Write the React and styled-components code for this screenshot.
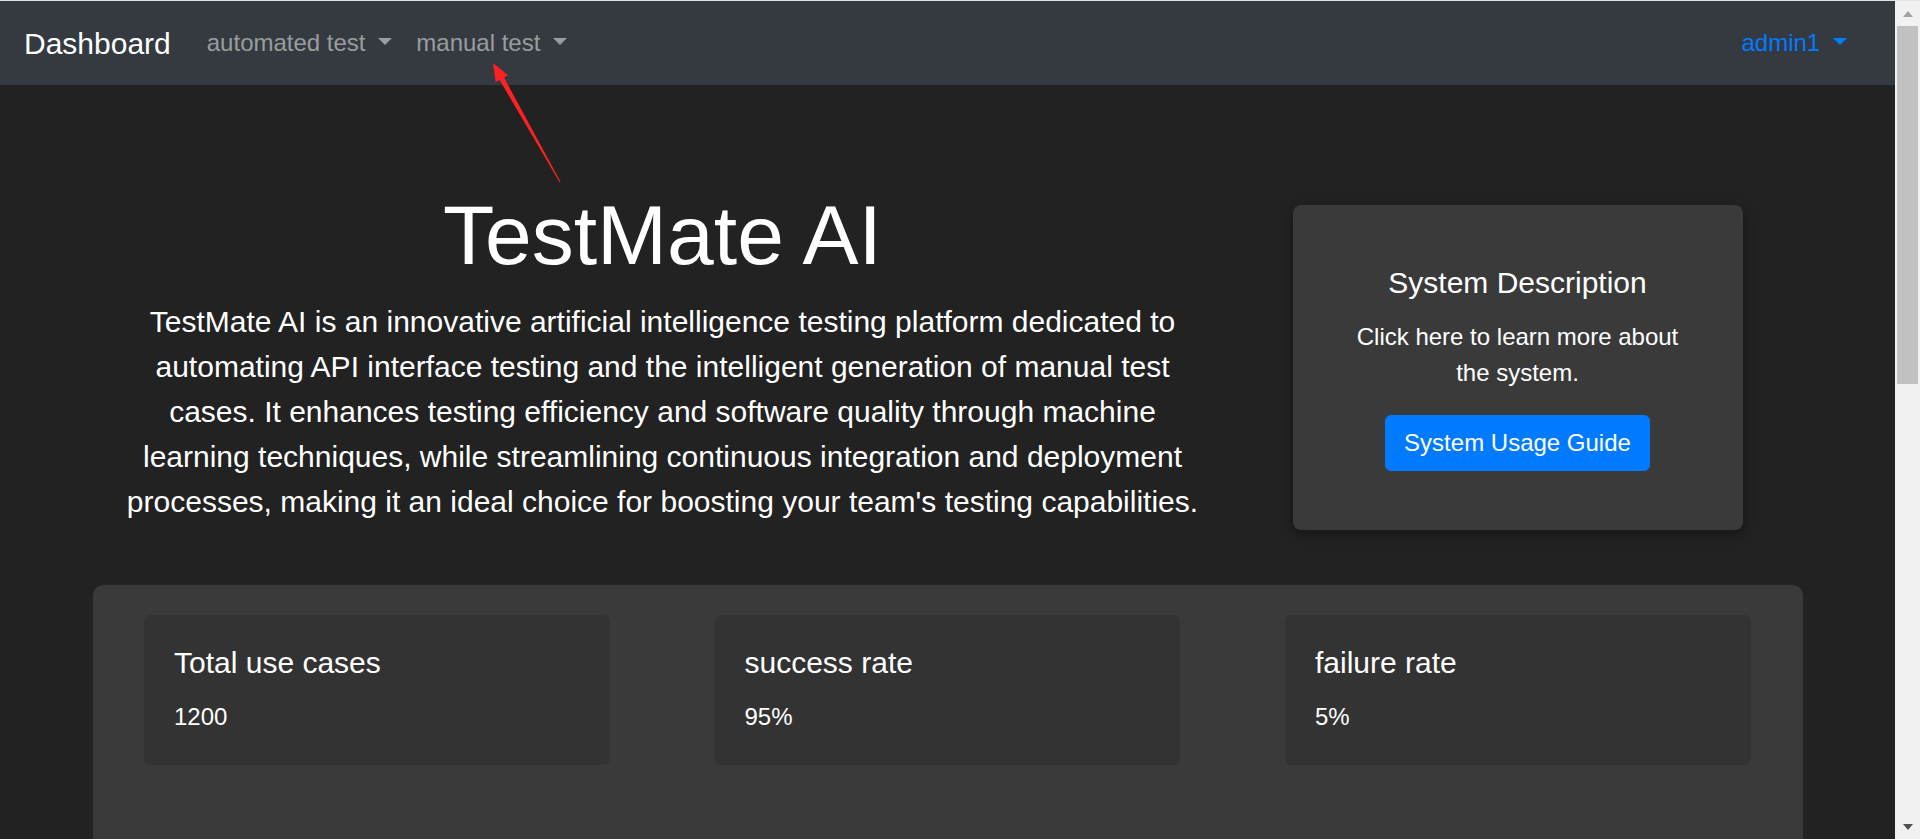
import { styled, createGlobalStyle } from "styled-components";

const GlobalStyle = createGlobalStyle`
  html, body {
    margin: 0;
    padding: 0;
    background: #222;
    overflow: hidden;
  }
  body {
    font-family: "Liberation Sans", Arial, sans-serif;
    color: #fff;
  }
`;

const Frame = styled.div`
  position: relative;
  display: flex;
  height: 100vh;
  box-sizing: border-box;
  border-top: 1px solid #e3e3e3;
  overflow: hidden;
`;

const Main = styled.div`
  flex: 1;
  min-width: 0;
  display: flex;
  flex-direction: column;
  background: #222;
`;

const Navbar = styled.nav`
  display: flex;
  align-items: center;
  height: 84px;
  flex-shrink: 0;
  padding: 0 36px 0 24px;
  background: #343a40;
`;

const Brand = styled.a`
  font-size: 30px;
  line-height: 45px;
  color: #fff;
  margin-right: 24px;
  text-decoration: none;
`;

const NavLink = styled.a`
  font-size: 24px;
  line-height: 36px;
  padding: 0 12px;
  color: ${(p) => (p.$active ? "#007bff" : "rgba(255, 255, 255, 0.5)")};
  text-decoration: none;
  white-space: nowrap;
  cursor: pointer;
`;

const Caret = styled.span`
  display: inline-block;
  margin-left: 0.255em;
  vertical-align: 0.255em;
  border-top: 0.3em solid;
  border-right: 0.3em solid transparent;
  border-left: 0.3em solid transparent;
  border-bottom: 0;
`;

const NavRight = styled.div`
  margin-left: auto;
`;

const Container = styled.div`
  width: 1710px;
  margin: 0 auto;
`;

const Hero = styled.section`
  display: flex;
  align-items: flex-start;
  padding-top: 100px;
`;

const IntroCol = styled.div`
  width: 1140px;
  box-sizing: border-box;
  padding: 0 22.5px;
  text-align: center;
`;

const Title = styled.h1`
  font-size: 84px;
  font-weight: 300;
  line-height: 1.2;
  margin: 0 0 13px;
`;

const Lead = styled.p`
  font-size: 30px;
  line-height: 1.5;
  margin: 0;
`;

const SideCol = styled.div`
  width: 570px;
  display: flex;
  justify-content: center;
  padding-top: 20px;
`;

const InfoCard = styled.div`
  width: 450px;
  box-sizing: border-box;
  padding: 60px 60px 59px;
  background: #3a3a3a;
  border-radius: 8px;
  box-shadow: 0 4px 12px rgba(0, 0, 0, 0.4);
  text-align: center;
`;

const CardTitle = styled.h5`
  font-size: 30px;
  font-weight: 400;
  line-height: 1.2;
  margin: 0 0 18px;
`;

const CardText = styled.p`
  font-size: 24px;
  line-height: 1.5;
  margin: 0 0 ${(p) => p.$gap || 0}px;
`;

const Button = styled.button`
  font-family: inherit;
  font-size: 24px;
  line-height: 1.5;
  padding: 9px 18px;
  color: #fff;
  background: #007bff;
  border: 1.5px solid #007bff;
  border-radius: 6px;
  cursor: pointer;
`;

const StatsPanel = styled.section`
  margin-top: 55px;
  display: grid;
  grid-template-columns: repeat(3, 1fr);
  column-gap: 105px;
  padding: 30px 52px 120px 51.5px;
  background: #3a3a3a;
  border-radius: 10px 10px 0 0;
`;

const StatCard = styled.div`
  padding: 30px;
  background: #333;
  border-radius: 6px;
`;

const Scrollbar = styled.div`
  width: 25px;
  flex-shrink: 0;
  display: flex;
  flex-direction: column;
  background: #f1f1f1;
`;

const ScrollArrow = styled.div`
  height: 25px;
  display: flex;
  align-items: center;
  justify-content: center;
  &::after {
    content: "";
    border-left: 5.5px solid transparent;
    border-right: 5.5px solid transparent;
    ${(p) =>
      p.$down
        ? "border-top: 6px solid #505050;"
        : "border-bottom: 6px solid #a3a3a3;"}
  }
`;

const Thumb = styled.div`
  height: 358px;
  margin: 0 2px;
  background: #c1c1c1;
`;

const Track = styled.div`
  flex: 1;
`;

const Annotation = styled.svg`
  position: absolute;
  top: 0;
  left: 0;
  pointer-events: none;
`;

const stats = [
  { label: "Total use cases", value: "1200" },
  { label: "success rate", value: "95%" },
  { label: "failure rate", value: "5%" },
];

export default function App() {
  return (
    <>
      <GlobalStyle />
      <Frame>
        <Main>
          <Navbar>
            <Brand href="#">Dashboard</Brand>
            <NavLink>automated test <Caret /></NavLink>
            <NavLink>manual test <Caret /></NavLink>
            <NavRight>
              <NavLink $active>admin1 <Caret /></NavLink>
            </NavRight>
          </Navbar>
          <Container>
            <Hero>
              <IntroCol>
                <Title>TestMate AI</Title>
                <Lead>
                  TestMate AI is an innovative artificial intelligence testing platform dedicated to
                  automating API interface testing and the intelligent generation of manual test
                  cases. It enhances testing efficiency and software quality through machine
                  learning techniques, while streamlining continuous integration and deployment
                  processes, making it an ideal choice for boosting your team's testing capabilities.
                </Lead>
              </IntroCol>
              <SideCol>
                <InfoCard>
                  <CardTitle>System Description</CardTitle>
                  <CardText $gap={24}>Click here to learn more about the system.</CardText>
                  <Button>System Usage Guide</Button>
                </InfoCard>
              </SideCol>
            </Hero>
            <StatsPanel>
              {stats.map((s) => (
                <StatCard key={s.label}>
                  <CardTitle>{s.label}</CardTitle>
                  <CardText>{s.value}</CardText>
                </StatCard>
              ))}
            </StatsPanel>
          </Container>
        </Main>
        <Scrollbar>
          <ScrollArrow />
          <Thumb />
          <Track />
          <ScrollArrow $down />
        </Scrollbar>
        <Annotation width="1920" height="839">
          <polygon
            points="493,62 508,74.3 504,76.5 560.5,180.8 559.6,181.2 499.6,78.9 495.7,81.1"
            fill="#ff2121"
          />
        </Annotation>
      </Frame>
    </>
  );
}
